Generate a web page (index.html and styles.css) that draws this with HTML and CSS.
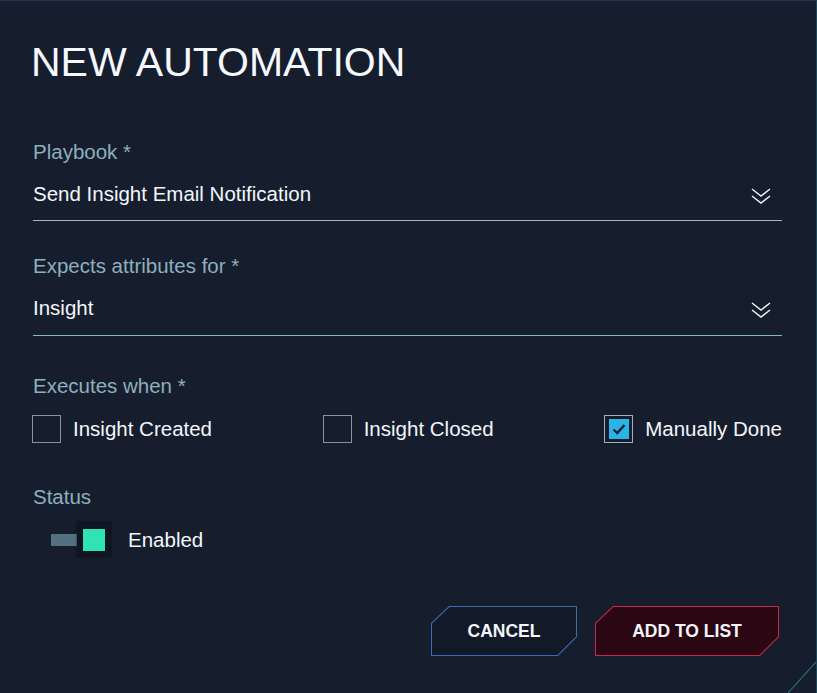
FILE: index.html
```html
<!DOCTYPE html>
<html lang="en">
<head>
<meta charset="utf-8">
<title>New Automation</title>
<link rel="stylesheet" href="styles.css">
</head>
<body>
<div class="dialog">
  <h1 class="title">NEW AUTOMATION</h1>

  <div class="field">
    <div class="field-label">Playbook *</div>
    <div class="select select-a">
      <span class="select-value">Send Insight Email Notification</span>
      <svg class="chevron" width="20" height="18" viewBox="0 0 20 18"><path d="M1 2 L10 9 L19 2 M1 9 L10 16 L19 9" fill="none" stroke="#eef2f6" stroke-width="1.5"/></svg>
    </div>
  </div>

  <div class="field field-next">
    <div class="field-label">Expects attributes for *</div>
    <div class="select select-b">
      <span class="select-value">Insight</span>
      <svg class="chevron" width="20" height="18" viewBox="0 0 20 18"><path d="M1 2 L10 9 L19 2 M1 9 L10 16 L19 9" fill="none" stroke="#eef2f6" stroke-width="1.5"/></svg>
    </div>
  </div>

  <div class="group">
    <div class="field-label">Executes when *</div>
    <div class="checks">
      <label class="check"><span class="box"></span><span>Insight Created</span></label>
      <label class="check"><span class="box"></span><span>Insight Closed</span></label>
      <label class="check"><span class="box box-on"><svg width="20" height="20" viewBox="0 0 20 20"><rect width="20" height="20" fill="#2ab4e4"/><path d="M4.5 10.5 L8.2 14 L15.5 6" fill="none" stroke="#132038" stroke-width="2.4"/></svg></span><span>Manually Done</span></label>
    </div>
  </div>

  <div class="group group-status">
    <div class="field-label">Status</div>
    <div class="toggle-row">
      <span class="track"></span>
      <span class="knob"><span class="knob-dot"></span></span>
      <span class="toggle-text">Enabled</span>
    </div>
  </div>

  <div class="actions">
    <div class="btn btn-cancel"><div class="btn-inner">CANCEL</div></div>
    <div class="btn btn-add"><div class="btn-inner">ADD TO LIST</div></div>
  </div>
</div>
</body>
</html>
```

FILE: styles.css
```css
html, body {
  margin: 0;
  padding: 0;
}
body {
  background: #161e2e;
  font-family: "Liberation Sans", Arial, sans-serif;
  color: #f2f5f9;
  width: 817px;
  height: 693px;
  overflow: hidden;
}
.dialog {
  position: relative;
  box-sizing: border-box;
  height: 693px;
  padding: 37px 34px 0 32px;
  border-top: 1px solid #1d3553;
  border-right: 1px solid #1d4656;
}
.dialog::after {
  content: "";
  position: absolute;
  right: 0;
  bottom: 0;
  width: 28px;
  height: 31px;
  background: linear-gradient(to top left, transparent calc(50% - 1px), #2b7386 50%, transparent calc(50% + 1px));
}
.title {
  margin: -1px 0 0 -1px;
  font-size: 41px;
  line-height: 50px;
  font-weight: normal;
  color: #f5f8fc;
  letter-spacing: 0;
}
.field {
  margin-top: 53px;
  padding-left: 1px;
}
.field-next {
  margin-top: 33px;
}
.field-label {
  font-size: 20.5px;
  line-height: 24px;
  color: #8eafbd;
  margin-bottom: 18px;
}
.group .field-label,
.group-status .field-label {
  padding-left: 1px;
}
.select {
  display: flex;
  align-items: center;
  justify-content: space-between;
  padding-bottom: 14px;
  border-bottom: 1px solid #a4b6c6;
  font-size: 20.5px;
  line-height: 24px;
  color: #f3f6fa;
}
.select-b {
  padding-bottom: 15px;
  border-bottom-color: #8bb7c5;
}
.chevron {
  margin-right: 11px;
  margin-top: 3px;
}
.group {
  margin-top: 38px;
}
.group .field-label {
  margin-bottom: 17px;
}
.checks {
  display: flex;
  justify-content: space-between;
  align-items: center;
}
.check {
  display: flex;
  align-items: center;
  gap: 12px;
  font-size: 20.5px;
  line-height: 28px;
  color: #f3f6fa;
}
.box {
  box-sizing: border-box;
  width: 29px;
  height: 28px;
  border: 1px solid #8493a6;
  display: flex;
  align-items: center;
  justify-content: center;
}
.box-on {
  border-color: #a2afbe;
}
.box-on svg {
  display: block;
}
.group-status {
  margin-top: 42px;
}
.group-status .field-label {
  margin-bottom: 13px;
}
.toggle-row {
  display: flex;
  align-items: center;
  padding-left: 19px;
  height: 36px;
}
.track {
  width: 26px;
  height: 12px;
  background: #55707f;
}
.knob {
  width: 34px;
  height: 36px;
  background: #0f1622;
  box-shadow: 0 0 2px rgba(0, 0, 0, 0.7), 0 1px 0 #1e2a3a;
  display: flex;
  align-items: center;
  justify-content: center;
}
.knob-dot {
  width: 22px;
  height: 22px;
  background: #2ee4b3;
}
.toggle-text {
  margin-left: 17px;
  font-size: 20.5px;
  color: #f3f6fa;
}
.actions {
  margin-top: 48px;
  display: flex;
  justify-content: flex-end;
  gap: 18px;
  padding-right: 3px;
}
.btn {
  height: 50px;
  padding: 1px;
  box-sizing: border-box;
  clip-path: polygon(18px 0, 100% 0, 100% calc(100% - 19px), calc(100% - 19px) 100%, 0 100%, 0 17px);
}
.btn-inner {
  height: 100%;
  display: flex;
  align-items: center;
  justify-content: center;
  font-size: 17.5px;
  font-weight: bold;
  color: #f3f6fa;
  clip-path: polygon(17.5px 0, 100% 0, 100% calc(100% - 18.5px), calc(100% - 18.5px) 100%, 0 100%, 0 16.5px);
}
.btn-cancel {
  width: 146px;
  background: #3a6db0;
}
.btn-cancel .btn-inner {
  background: #121a28;
}
.btn-add {
  width: 184px;
  background: #c02a4c;
}
.btn-add .btn-inner {
  background: #2a0712;
}
```
